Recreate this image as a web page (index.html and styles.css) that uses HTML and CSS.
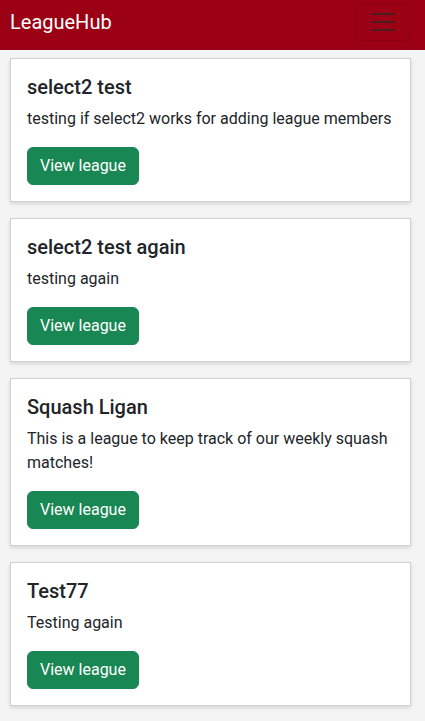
FILE: index.html
```html
<!DOCTYPE html>
<html lang="en">
<head>
<meta charset="utf-8">
<title>LeagueHub</title>
<link rel="stylesheet" href="styles.css">
</head>
<body>
<nav class="navbar">
  <a class="brand" href="#">LeagueHub</a>
  <button class="toggler" type="button" aria-label="Toggle navigation">
    <svg width="30" height="30" viewBox="0 0 30 30"><path d="M4 7h22M4 15h22M4 23h22" stroke="#4a1c22" stroke-width="2.2" stroke-linecap="round"/></svg>
  </button>
</nav>
<main class="list">
  <div class="card">
    <h5 class="card-title">select2 test</h5>
    <p class="card-text">testing if select2 works for adding league members</p>
    <a class="btn" href="#">View league</a>
  </div>
  <div class="card">
    <h5 class="card-title">select2 test again</h5>
    <p class="card-text">testing again</p>
    <a class="btn" href="#">View league</a>
  </div>
  <div class="card">
    <h5 class="card-title">Squash Ligan</h5>
    <p class="card-text">This is a league to keep track of our weekly squash matches!</p>
    <a class="btn" href="#">View league</a>
  </div>
  <div class="card">
    <h5 class="card-title">Test77</h5>
    <p class="card-text">Testing again</p>
    <a class="btn" href="#">View league</a>
  </div>
</main>
</body>
</html>
```
FILE: styles.css
```css
* { box-sizing: border-box; }
html, body {
  margin: 0;
  padding: 0;
}
body {
  background: #f4f4f4;
  font-family: Roboto, "Liberation Sans", sans-serif;
  font-size: 16px;
  line-height: 1.5;
  color: #212529;
}
.navbar {
  height: 50px;
  background: #9b0014;
  display: flex;
  align-items: center;
  justify-content: space-between;
  padding: 3px 15px 9px 10px;
}
.brand {
  color: #fff;
  text-decoration: none;
  font-size: 20px;
  line-height: 30px;
}
.toggler {
  width: 55px;
  height: 38px;
  background: transparent;
  border: 1px solid rgba(0,0,0,0.1);
  border-radius: 6px;
  display: flex;
  align-items: center;
  justify-content: center;
  padding: 0;
}
.toggler svg { display: block; }
.list {
  display: flex;
  flex-direction: column;
  gap: 16px;
  padding: 8px 14px 16px 10px;
}
.card {
  background: #fff;
  border: 1px solid #d2d2d2;
  box-shadow: 0 2px 4px rgba(0,0,0,0.12);
  padding: 16px;
  display: flex;
  flex-direction: column;
  align-items: flex-start;
}
.card-title {
  margin: 0 0 8px;
  font-size: 20px;
  font-weight: 500;
  line-height: 1.2;
}
.card-text {
  margin: 0 0 16px;
}
.btn {
  display: inline-block;
  background: #198754;
  color: #fff;
  text-decoration: none;
  padding: 6px 12px;
  border-radius: 6px;
  line-height: 24px;
  border: 1px solid #198754;
}
```
